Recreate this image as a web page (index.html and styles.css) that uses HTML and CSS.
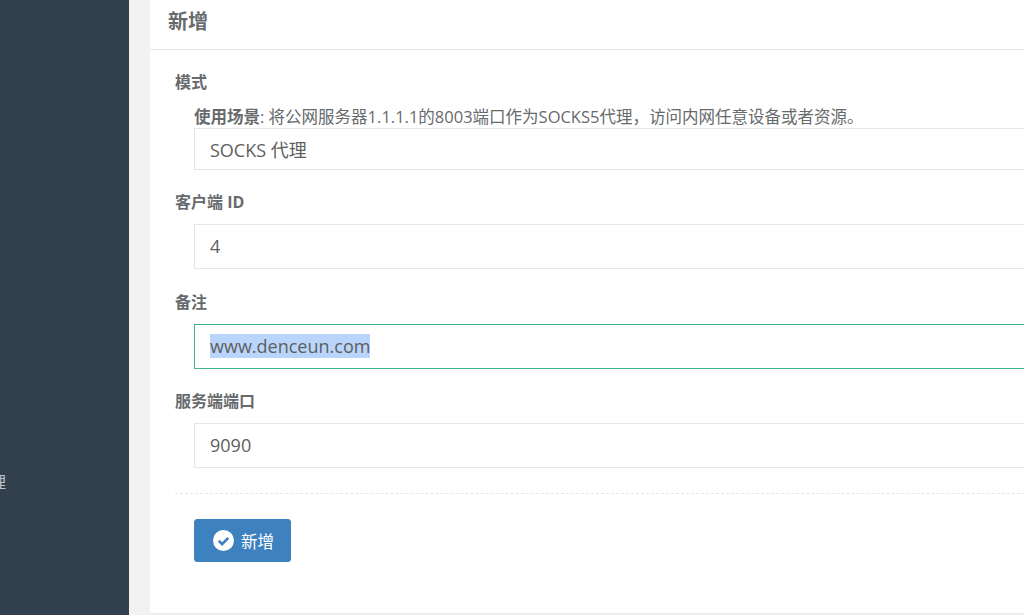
FILE: index.html
```html
<!DOCTYPE html>
<html lang="zh-CN">
  <head>
    <meta charset="UTF-8" />
    <title>新增</title>
    <link rel="stylesheet" href="styles.css">
  </head>
  <body>
    <div class="layout">
      <aside class="sidebar">
        <div class="nav-item"><span>管理</span></div>
      </aside>

      <main class="content">
        <div class="card">
          <div class="card-header">新增</div>

          <form class="card-body">
            <div class="form-group">
              <label class="form-label">模式</label>
              <div class="form-help"><b>使用场景</b>: 将公网服务器1.1.1.1的8003端口作为SOCKS5代理，访问内网任意设备或者资源。</div>
              <div class="form-control control-mode">SOCKS 代理</div>
            </div>

            <div class="form-group group-client">
              <label class="form-label">客户端 ID</label>
              <div class="form-control">4</div>
            </div>

            <div class="form-group">
              <label class="form-label">备注</label>
              <div class="form-control focused"><span class="selected">www.denceun.com</span></div>
            </div>

            <div class="form-group">
              <label class="form-label">服务端端口</label>
              <div class="form-control">9090</div>
            </div>

            <div class="form-actions">
              <button type="button" class="btn-primary">
                <svg class="btn-icon" viewBox="0 0 21 21" width="21" height="21">
                  <circle cx="10.5" cy="10.5" r="10.5" fill="#fff" />
                  <path d="M5.8 10.8l3.3 3.3 6.2-6.2" fill="none" stroke="#3d81bf" stroke-width="2.7" />
                </svg>
                新增
              </button>
            </div>
          </form>
        </div>
      </main>
    </div>
  </body>
</html>
```

FILE: styles.css
```css
html,
body {
  margin: 0;
  height: 615px;
  overflow: hidden;
}

body {
  font-family: "Open Sans", "Noto Sans CJK SC", sans-serif;
  color: #676a6c;
  background: #f2f2f2;
}

.layout {
  display: flex;
  height: 615px;
}

.sidebar {
  flex: 0 0 129px;
  box-sizing: border-box;
  padding-top: 472px;
  background: #323f4d;
  color: #b8c4d0;
  font-size: 16px;
  line-height: 20px;
}

.nav-item {
  display: flex;
  justify-content: flex-end;
  width: 6px;
  overflow: hidden;
}

.nav-item span {
  flex: none;
}

.content {
  flex: 1;
  min-width: 0;
  padding-left: 21px;
}

.card {
  box-sizing: border-box;
  width: 1000px;
  height: 614px;
  background: #fff;
  border-bottom: 1px solid #e8e8e8;
}

.card-header {
  box-sizing: border-box;
  height: 50px;
  padding: 8px 18px 0;
  border-bottom: 1px solid #e8e8e8;
  font-size: 20px;
  font-weight: 700;
  line-height: 28px;
}

.card-body {
  padding: 22px 25px 0;
}

.form-group {
  margin-bottom: 22px;
}

.group-client {
  margin-bottom: 23px;
}

.form-label {
  display: block;
  margin-bottom: 12px;
  font-size: 16px;
  font-weight: 700;
  line-height: 20px;
}

.form-help {
  margin: 15px 0 1px 19px;
  font-size: 16.5px;
  line-height: 20px;
  white-space: nowrap;
}

.form-control {
  box-sizing: border-box;
  height: 45px;
  margin-left: 19px;
  padding: 0 15px;
  border: 1px solid #e5e6e7;
  font-size: 18px;
  line-height: 43px;
  color: #5e5e5e;
}

.control-mode {
  height: 42px;
  line-height: 42px;
}

.focused {
  border-color: #3fb48f;
}

.selected {
  background: #b9d5fb;
}

.form-actions {
  margin-top: 25px;
  padding-top: 25px;
  border-top: 1px dashed #e5e6e7;
}

.btn-primary {
  display: flex;
  align-items: center;
  gap: 7px;
  box-sizing: border-box;
  width: 97px;
  height: 43px;
  margin-left: 19px;
  padding: 0 0 0 18px;
  border: 1px solid #3d81bf;
  border-radius: 3px;
  background: #3d81bf;
  color: #fff;
  font-family: inherit;
  font-size: 16.5px;
}

.btn-icon {
  flex: none;
}
```
